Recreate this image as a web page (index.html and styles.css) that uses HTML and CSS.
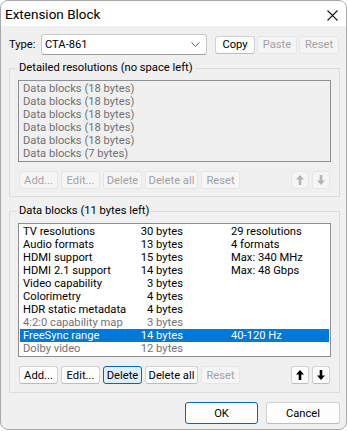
FILE: index.html
```html
<!DOCTYPE html>
<html>
<head>
<meta charset="utf-8">
<link rel="stylesheet" href="styles.css">
</head>
<body>
<div class="window">
  <div class="titlebar">
    <span class="title">Extension Block</span>
    <svg class="close" width="11" height="11" viewBox="0 0 11 11"><path d="M0.5 0.5 L10.5 10.5 M10.5 0.5 L0.5 10.5" stroke="#1a1a1a" stroke-width="1.1" fill="none"/></svg>
  </div>
  <div class="typerow">
    <span class="typelabel">Type:</span>
    <div class="combo"><span>CTA-861</span>
      <svg width="9" height="5" viewBox="0 0 9 5"><path d="M0.5 0.5 L4.5 4.5 L8.5 0.5" stroke="#606060" stroke-width="1" fill="none"/></svg>
    </div>
    <div class="topbtns">
      <button class="btn tbtn">Copy</button>
      <button class="btn tbtn dis">Paste</button>
      <button class="btn tbtn dis">Reset</button>
    </div>
  </div>

  <div class="group g1">
    <span class="glabel">Detailed resolutions (no space left)</span>
    <div class="list list1">
      <div class="item">Data blocks (18 bytes)</div>
      <div class="item">Data blocks (18 bytes)</div>
      <div class="item">Data blocks (18 bytes)</div>
      <div class="item">Data blocks (18 bytes)</div>
      <div class="item">Data blocks (18 bytes)</div>
      <div class="item">Data blocks (7 bytes)</div>
    </div>
    <div class="btnrow">
      <button class="btn sbtn dis">Add...</button>
      <button class="btn sbtn dis">Edit...</button>
      <button class="btn sbtn dis">Delete</button>
      <button class="btn sbtn wide dis">Delete all</button>
      <button class="btn sbtn dis">Reset</button>
      <div class="arrows">
        <button class="btn abtn dis"><svg width="8" height="10" viewBox="0 0 8 10"><path d="M4 0 L8 4.5 H5.3 V10 H2.7 V4.5 H0 Z" fill="#b4b4b4"/></svg></button>
        <button class="btn abtn dis"><svg width="8" height="10" viewBox="0 0 8 10"><path d="M4 10 L8 5.5 H5.3 V0 H2.7 V5.5 H0 Z" fill="#b4b4b4"/></svg></button>
      </div>
    </div>
  </div>

  <div class="group g2">
    <span class="glabel">Data blocks (11 bytes left)</span>
    <div class="list list2">
      <div class="row"><span>TV resolutions</span><span class="b">30 bytes</span><span class="v">29 resolutions</span></div>
      <div class="row"><span>Audio formats</span><span class="b">13 bytes</span><span class="v">4 formats</span></div>
      <div class="row"><span>HDMI support</span><span class="b">15 bytes</span><span class="v">Max: 340 MHz</span></div>
      <div class="row"><span>HDMI 2.1 support</span><span class="b">14 bytes</span><span class="v">Max: 48 Gbps</span></div>
      <div class="row"><span>Video capability</span><span class="b">3 bytes</span><span class="v"></span></div>
      <div class="row"><span>Colorimetry</span><span class="b">4 bytes</span><span class="v"></span></div>
      <div class="row"><span>HDR static metadata</span><span class="b">4 bytes</span><span class="v"></span></div>
      <div class="row gray"><span>4:2:0 capability map</span><span class="b">3 bytes</span><span class="v"></span></div>
      <div class="row sel"><span>FreeSync range</span><span class="b">14 bytes</span><span class="v">40-120 Hz</span></div>
      <div class="row gray"><span>Dolby video</span><span class="b">12 bytes</span><span class="v"></span></div>
    </div>
    <div class="btnrow">
      <button class="btn sbtn">Add...</button>
      <button class="btn sbtn">Edit...</button>
      <button class="btn sbtn focus">Delete</button>
      <button class="btn sbtn wide">Delete all</button>
      <button class="btn sbtn dis">Reset</button>
      <div class="arrows">
        <button class="btn abtn"><svg width="8" height="10" viewBox="0 0 8 10"><path d="M4 0 L8 4.5 H5.3 V10 H2.7 V4.5 H0 Z" fill="#000"/></svg></button>
        <button class="btn abtn"><svg width="8" height="10" viewBox="0 0 8 10"><path d="M4 10 L8 5.5 H5.3 V0 H2.7 V5.5 H0 Z" fill="#000"/></svg></button>
      </div>
    </div>
  </div>

  <div class="footer">
    <button class="btn fbtn default">OK</button>
    <button class="btn fbtn">Cancel</button>
  </div>
</div>
</body>
</html>
```

FILE: styles.css
```css
html, body {
  margin: 0;
  padding: 0;
  background: #ffffff;
}
body {
  font-family: Roboto, "Noto Sans", sans-serif;
  font-size: 11.2px;
  color: #000;
}
.window {
  box-sizing: border-box;
  width: 347px;
  height: 430px;
  border: 1px solid #a9a9a9;
  border-radius: 8px;
  overflow: hidden;
  background: #f0f0f0;
  display: flex;
  flex-direction: column;
}
.titlebar {
  height: 25px;
  background: #ffffff;
  display: flex;
  align-items: center;
  justify-content: space-between;
  padding-left: 4px;
  padding-right: 8px;
  flex-shrink: 0;
}
.title {
  font-size: 13.5px;
  line-height: 24px;
}
.close {
  display: block;
  margin-top: 3px;
}
.typerow {
  display: flex;
  align-items: center;
  margin-top: 8px;
  padding-left: 8px;
  height: 21px;
}
.typelabel {
  width: 32px;
}
.combo {
  box-sizing: border-box;
  width: 166px;
  height: 21px;
  background: #fff;
  border: 1px solid #c9c9c9;
  border-bottom-color: #a0a0a0;
  border-radius: 3px;
  display: flex;
  align-items: center;
  justify-content: space-between;
  padding: 0 6px 0 3px;
}
.topbtns {
  display: flex;
  gap: 2px;
  margin-left: 8px;
}
.btn {
  box-sizing: border-box;
  font-family: inherit;
  font-size: 11.2px;
  color: #000;
  background: #fdfdfd;
  border: 1px solid #d2d2d2;
  border-bottom-color: #bcbcbc;
  border-radius: 3px;
  padding: 0;
  margin: 0;
  display: flex;
  align-items: center;
  justify-content: center;
}
.btn.dis {
  background: #f5f5f5;
  border-color: #e6e6e6;
  color: #a3a3a3;
}
.btn.focus {
  background: #e0eef9;
  border-color: #0067c0;
}
.tbtn {
  width: 40px;
  height: 18px;
}
.group {
  position: relative;
  box-sizing: border-box;
  width: 331px;
  margin-left: 8px;
  border: 1px solid #dcdcdc;
  padding: 11px 8px 7px 8px;
}
.g1 {
  margin-top: 13px;
}
.g2 {
  margin-top: 14px;
  padding-bottom: 8px;
}
.glabel {
  position: absolute;
  top: -8px;
  left: 7px;
  padding: 0 2px;
  background: #f0f0f0;
  line-height: 14px;
}
.list {
  box-sizing: border-box;
  border: 1px solid #8e8f94;
  padding: 1px;
}
.list1 {
  background: #f0f0f0;
  color: #727272;
}
.list2 {
  background: #fff;
}
.item {
  height: 13px;
  line-height: 13px;
  padding-left: 3px;
  white-space: nowrap;
}
.row {
  display: grid;
  grid-template-columns: 108px 52px auto;
  height: 13px;
  line-height: 13px;
  padding-left: 3px;
  white-space: nowrap;
}
.row .b {
  text-align: right;
}
.row .v {
  padding-left: 48px;
}
.row.gray {
  color: #727272;
}
.row.sel {
  background: #0078d7;
  color: #fff;
}
.btnrow {
  display: flex;
  gap: 3px;
  margin-top: 9px;
  padding-left: 1px;
  padding-right: 1px;
}
.sbtn {
  width: 39px;
  height: 18px;
}
.sbtn.wide {
  width: 53px;
}
.arrows {
  margin-left: auto;
  display: flex;
  gap: 3px;
}
.abtn {
  width: 18px;
  height: 18px;
}
.footer {
  display: flex;
  justify-content: flex-end;
  gap: 8px;
  margin-top: 9px;
  padding-right: 6px;
}
.fbtn {
  width: 73px;
  height: 22px;
}
.fbtn + .fbtn {
  width: 74px;
}
.btn.default {
  border-color: #0067c0;
}
```
